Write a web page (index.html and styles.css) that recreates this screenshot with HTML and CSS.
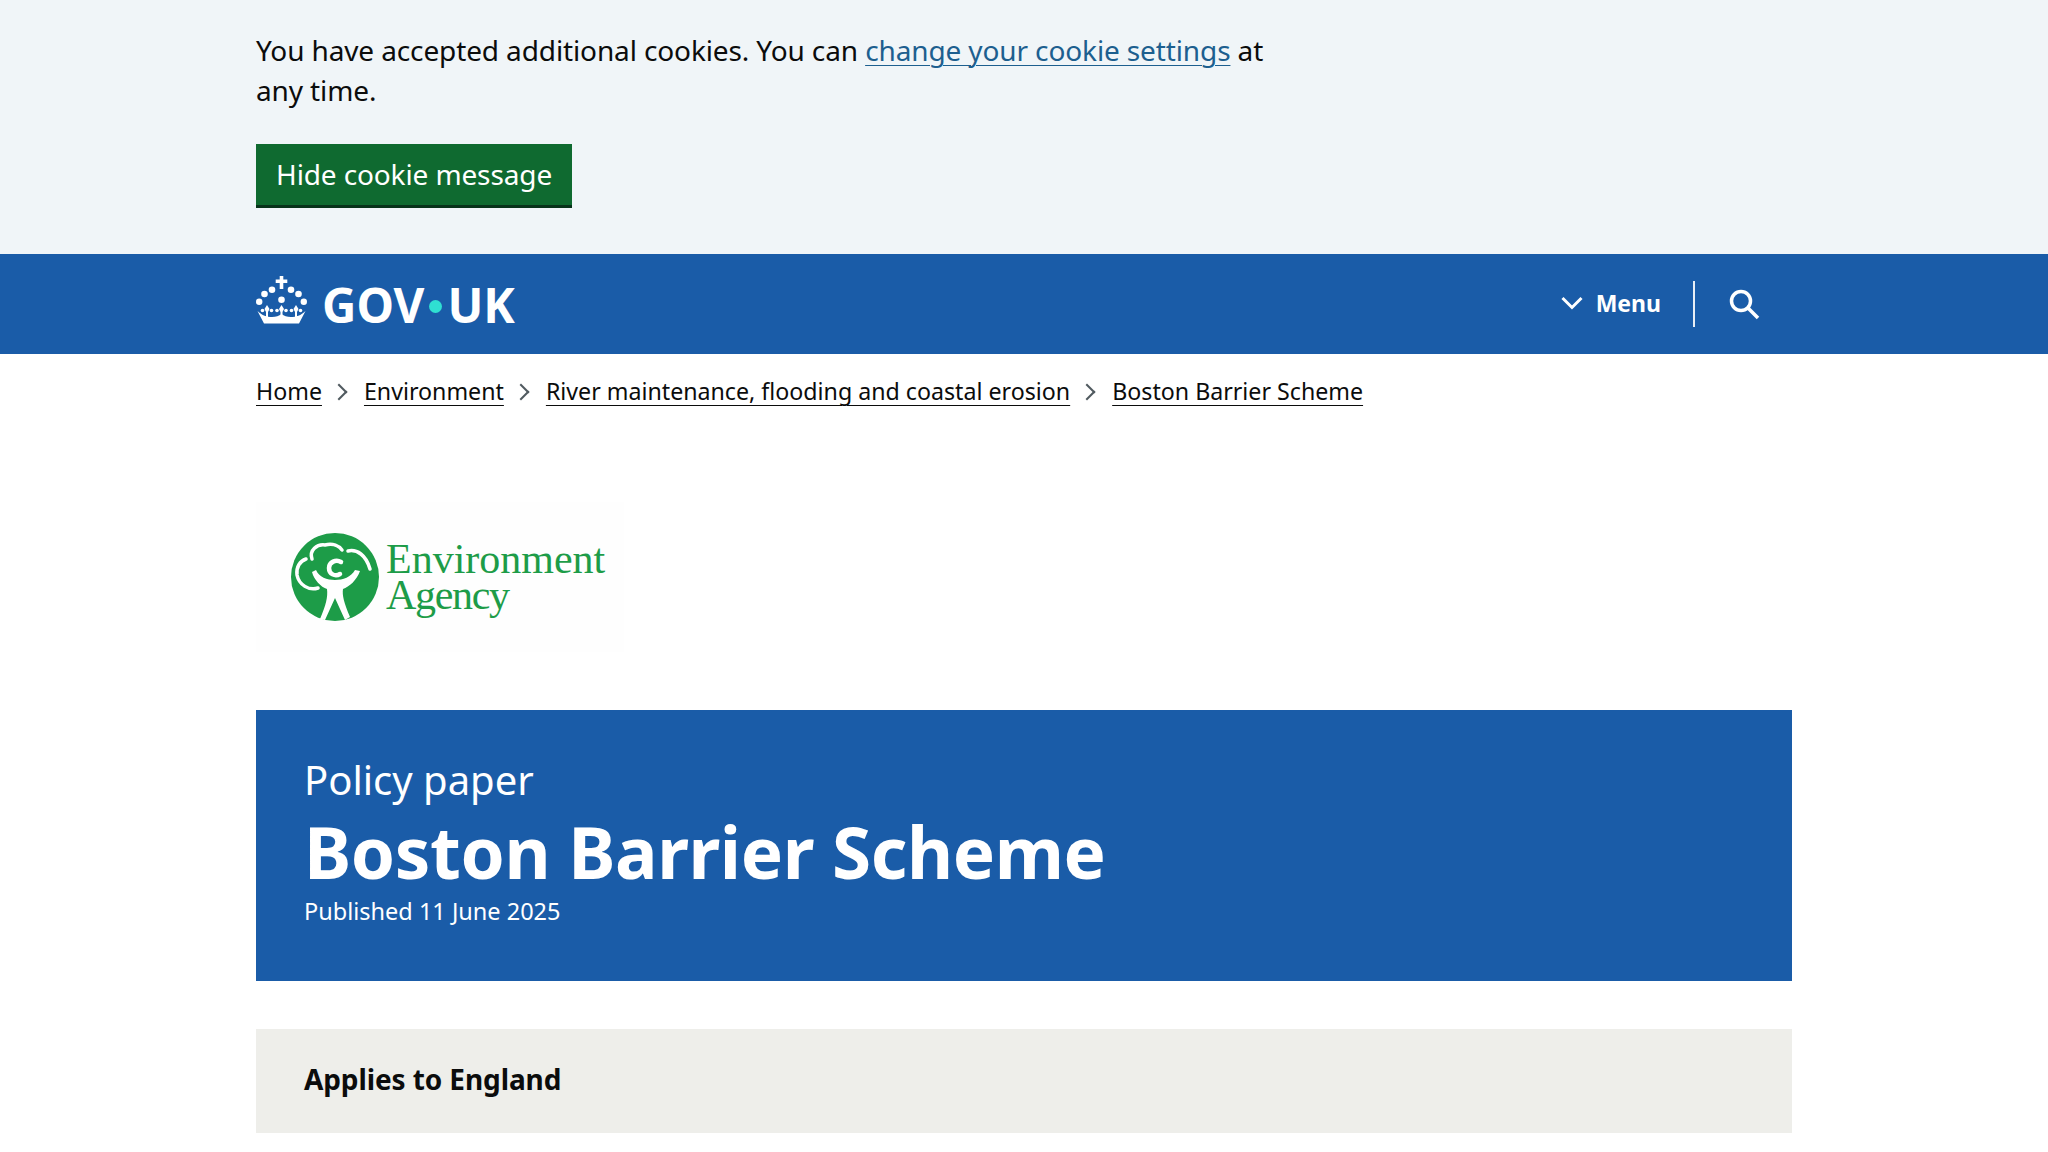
FILE: index.html
```html
<!DOCTYPE html>
<html lang="en">
<head>
    <meta charset="UTF-8">
    <meta name="viewport" content="width=device-width, initial-scale=1.0">
    <title>Boston Barrier Scheme - GOV.UK</title>
    <link rel="stylesheet" href="styles.css">
</head>
<body>
    <div class="cookie-banner">
        <div class="container">
            <p class="cookie-text">You have accepted additional cookies. You can <a href="#">change your cookie settings</a> at any time.</p>
            <button class="cookie-button" type="button">Hide cookie message</button>
        </div>
    </div>

    <header class="site-header">
        <div class="container header-inner">
            <a href="#" class="logo">
                <svg class="crown" viewBox="0 0 51 48" width="51" height="48" fill="#fff">
                    <path d="M23.700 0h3.600v3.500h4v3.400h-4V13h-3.600V6.900h-4V3.500h4z"/>
                    <circle cx="25.500" cy="23.700" r="3.300"/>
                    <circle cx="16" cy="13.700" r="3.300"/>
                    <circle cx="35" cy="13.700" r="3.300"/>
                    <circle cx="8.500" cy="18" r="3.300"/>
                    <circle cx="42.500" cy="18" r="3.300"/>
                    <circle cx="3.200" cy="25.700" r="3.200"/>
                    <circle cx="47.800" cy="25.700" r="3.200"/>
                    <path d="M11 29l2.500 4-1.500 3v5h-2v-5l-1.500-3z"/>
                    <path d="M25.500 29l2.500 4-1.500 3v4h-2v-4l-1.500-3z"/>
                    <path d="M40 29l2.500 4-1.500 3v5h-2v-5l-1.500-3z"/>
                    <circle cx="6.500" cy="34.500" r="1.800"/>
                    <circle cx="15.500" cy="34.500" r="1.800"/>
                    <circle cx="21" cy="34.500" r="1.800"/>
                    <circle cx="30" cy="34.500" r="1.800"/>
                    <circle cx="35.500" cy="34.500" r="1.800"/>
                    <circle cx="44.500" cy="34.500" r="1.800"/>
                    <path d="M1.500 35C6 39.500 11 41 16 41c4 0 7-1 9.500-3 2.500 2 5.500 3 9.500 3 5 0 10-1.500 14.500-6L43 47.500H8z"/>
                </svg>
                <span class="logo-text">GOV<span class="logo-dot"></span>UK</span>
            </a>
            <div class="header-nav">
                <button class="menu-button" type="button">
                    <svg viewBox="0 0 22 14" width="22" height="14" fill="none" stroke="#fff" stroke-width="3">
                        <path d="M1.500 2l9.500 9.500L20.500 2"/>
                    </svg>
                    Menu
                </button>
                <span class="nav-divider"></span>
                <button class="search-button" type="button" aria-label="Search">
                    <svg viewBox="0 0 32 32" width="32" height="32" fill="none" stroke="#fff" stroke-width="3.500">
                        <circle cx="13" cy="13" r="9.500"/>
                        <path d="M20 20l10 10"/>
                    </svg>
                </button>
            </div>
        </div>
    </header>

    <div class="container">
        <nav class="breadcrumbs">
            <a href="#">Home</a>
            <span class="crumb-arrow"></span>
            <a href="#">Environment</a>
            <span class="crumb-arrow"></span>
            <a href="#">River maintenance, flooding and coastal erosion</a>
            <span class="crumb-arrow"></span>
            <a href="#">Boston Barrier Scheme</a>
        </nav>

        <div class="org-logo">
            <svg class="org-mark" viewBox="0 0 88 88" width="88" height="88">
                <circle cx="44" cy="44" r="44" fill="#1d9c48"/>
                <g fill="none" stroke="#fff" stroke-width="3.500" stroke-linecap="round">
                    <path d="M27 55C18 58 8 52 6 42c-1-8 3-14 9-16"/>
                    <path d="M21 26c-3-9 5-15 13-14 8-2 14 1 17 5"/>
                    <path d="M57 18c9-2 18 4 22 18"/>
                </g>
                <path fill="none" stroke="#fff" stroke-width="4.500" stroke-linecap="round" d="M50 29c-5-3-12 0-12 6s6 9 11 6"/>
                <path fill="#fff" d="M21 39l4-2c3 7 11 10 19 10s16-3 20-10l5 1c-3 9-11 16-17 18-1 6 1 14 7 28l-5 3-10-22-10 22-5-1c6-14 8-22 7-30-6-2-13-9-15-17z"/>
            </svg>
            <div class="org-name">Environment<br><span class="org-name-short">Agency</span></div>
        </div>

        <div class="title-block">
            <p class="title-type">Policy paper</p>
            <h1 class="title-main">Boston Barrier Scheme</h1>
            <p class="title-date">Published 11 June 2025</p>
        </div>

        <div class="applies-to">Applies to England</div>
    </div>
</body>
</html>
```

FILE: styles.css
```css
* {
    box-sizing: border-box;
}
body {
    margin: 0;
    font-family: "Noto Sans", "Liberation Sans", sans-serif;
    color: #0b0c0c;
    background-color: #fff;
}
a {
    color: inherit;
}
button {
    font-family: inherit;
    border: none;
    cursor: pointer;
}
.container {
    width: 1536px;
    margin: 0 auto;
}
.cookie-banner {
    height: 254px;
    padding-top: 30px;
    background-color: #f0f5f8;
}
.cookie-text {
    width: 1024px;
    margin: 0 0 34px;
    font-size: 28px;
    letter-spacing: -0.12px;
    line-height: 40px;
}
.cookie-text a {
    color: #1d5f8f;
    text-underline-offset: 4px;
    text-decoration-thickness: 1px;
}
.cookie-button {
    display: block;
    height: 64px;
    padding: 0 20px 5px;
    font-size: 28px;
    letter-spacing: -0.12px;
    color: #fff;
    background-color: #0f6a30;
    box-shadow: inset 0 -3px 0 #07331a;
}
.site-header {
    height: 100px;
    background-color: #1a5ca8;
}
.header-inner {
    display: flex;
    align-items: center;
    justify-content: space-between;
    height: 100%;
}
.logo {
    display: flex;
    align-items: center;
    gap: 15px;
    text-decoration: none;
    color: #fff;
}
.crown {
    margin-bottom: 8px;
}
.logo-text {
    display: flex;
    align-items: center;
    padding-top: 2px;
    font-size: 47.500px;
    font-weight: 700;
    line-height: 1;
}
.logo-dot {
    width: 13px;
    height: 13px;
    margin: 2px 5px 0;
    border-radius: 50%;
    background-color: #2fe0d2;
}
.header-nav {
    display: flex;
    align-items: center;
    padding-right: 32px;
}
.menu-button {
    display: flex;
    align-items: center;
    gap: 13px;
    padding: 0 0 2px;
    font-size: 23px;
    font-weight: 700;
    color: #fff;
    background: none;
}
.nav-divider {
    width: 2px;
    height: 46px;
    margin: 0 33px 0 32px;
    background-color: #e8eef5;
}
.search-button {
    display: flex;
    padding: 0;
    background: none;
}
.breadcrumbs {
    display: flex;
    align-items: center;
    gap: 14px;
    padding-top: 19px;
    font-size: 23.200px;
    line-height: 36px;
}
.breadcrumbs a {
    text-underline-offset: 5px;
    text-decoration-thickness: 1px;
}
.crumb-arrow {
    width: 12px;
    height: 12px;
    margin: 2px 5px 0 -3px;
    border-top: 2px solid #505a5f;
    border-right: 2px solid #505a5f;
    transform: rotate(45deg);
}
.org-logo {
    display: flex;
    align-items: center;
    gap: 7px;
    width: 368px;
    height: 150px;
    margin-top: 93px;
    padding-left: 35px;
    background-color: #fefefe;
}
.org-name {
    font-family: "Liberation Serif", serif;
    font-size: 42px;
    line-height: 36px;
    color: #1d9c48;
}
.org-name-short {
    letter-spacing: -1.300px;
}
.title-block {
    height: 271px;
    margin-top: 58px;
    padding: 43px 48px 0;
    color: #fff;
    background-color: #1a5ca8;
}
.title-type {
    margin: 0;
    font-size: 40px;
    line-height: 54px;
}
.title-main {
    margin: 0;
    padding-top: 1px;
    font-size: 71px;
    letter-spacing: -0.4px;
    line-height: 88px;
}
.title-date {
    margin: -1px 0 0;
    font-size: 23.500px;
    line-height: 32px;
}
.applies-to {
    height: 104px;
    margin-top: 48px;
    padding-left: 48px;
    font-size: 28px;
    font-weight: 700;
    letter-spacing: -0.1px;
    line-height: 100px;
    background-color: #eeeeea;
}
```
